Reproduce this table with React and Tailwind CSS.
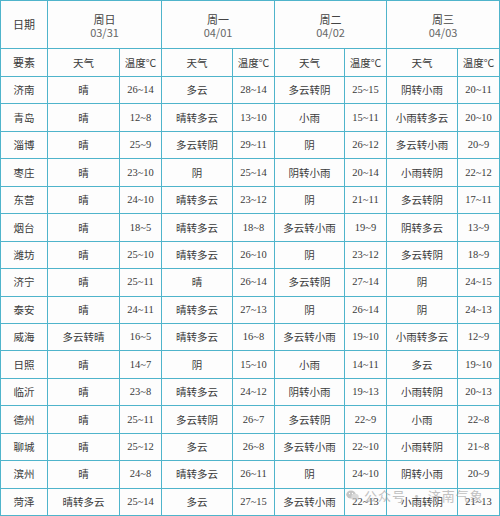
import React from "react";

const days = [
  ["周日", "03/31"],
  ["周一", "04/01"],
  ["周二", "04/02"],
  ["周三", "04/03"],
];

const rows = [
  ["济南", "晴", "26~14", "多云", "28~14", "多云转阴", "25~15", "阴转小雨", "20~11"],
  ["青岛", "晴", "12~8", "晴转多云", "13~10", "小雨", "15~11", "小雨转多云", "20~10"],
  ["淄博", "晴", "25~9", "多云转阴", "29~11", "阴", "26~12", "多云转小雨", "20~9"],
  ["枣庄", "晴", "23~10", "阴", "25~14", "阴转小雨", "20~14", "小雨转阴", "22~12"],
  ["东营", "晴", "24~10", "晴转多云", "23~12", "阴", "21~11", "多云转阴", "17~11"],
  ["烟台", "晴", "18~5", "晴转多云", "18~8", "多云转小雨", "19~9", "阴转多云", "13~9"],
  ["潍坊", "晴", "25~10", "晴转多云", "26~10", "阴", "23~12", "多云转阴", "18~9"],
  ["济宁", "晴", "25~11", "晴", "26~14", "多云转阴", "27~14", "阴", "24~15"],
  ["泰安", "晴", "24~11", "晴转多云", "27~13", "阴", "26~14", "阴", "24~13"],
  ["威海", "多云转晴", "16~5", "晴转多云", "16~8", "多云转小雨", "19~10", "小雨转多云", "12~9"],
  ["日照", "晴", "14~7", "阴", "15~10", "小雨", "14~11", "多云", "19~10"],
  ["临沂", "晴", "23~8", "晴转多云", "24~12", "阴转小雨", "19~13", "小雨转阴", "20~13"],
  ["德州", "晴", "25~11", "多云转阴", "26~7", "多云转阴", "22~9", "小雨", "22~8"],
  ["聊城", "晴", "25~12", "多云", "26~8", "多云转小雨", "22~10", "小雨转阴", "21~8"],
  ["滨州", "晴", "24~8", "晴转多云", "26~11", "阴", "24~10", "阴转小雨", "20~9"],
  ["菏泽", "晴转多云", "25~14", "多云", "27~15", "多云转小雨", "22~13", "小雨转阴", "21~13"],
];

const cjk = "font-['Microsoft_YaHei','Noto_Sans_CJK_SC',sans-serif]";
const num = "font-['Liberation_Serif','Times_New_Roman',serif]";

function Cell({ children, className = "" }) {
  return (
    <div className={`bg-[#fdfdfd] flex items-center justify-center text-[#3a3a3a] ${className}`}>
      {children}
    </div>
  );
}

export default function App() {
  return (
    <div className="relative w-[500px] h-[516px] bg-white overflow-hidden">
      <div className="w-[500px] h-[516px] bg-[#4fb4cb] p-px grid gap-px grid-cols-[46px_71px_41px_70px_41px_69px_41px_70px_41px] grid-rows-[47px_27px_repeat(16,minmax(0,1fr))]">
        <Cell className={`${cjk} text-[11px]`}>日期</Cell>
        {days.map(([d, dt]) => (
          <Cell key={d} className="col-span-2 flex-col leading-[13px] pt-[2px]">
            <span className={`${cjk} text-[11px] text-[#444]`}>{d}</span>
            <span className={`${cjk} text-[11px] text-[#666]`}>{dt}</span>
          </Cell>
        ))}
        <Cell className={`${cjk} text-[11px]`}>要素</Cell>
        {days.map(([d]) => (
          <React.Fragment key={d}>
            <Cell className={`${cjk} text-[10.5px]`}>天气</Cell>
            <Cell className={`${cjk} text-[10.5px]`}>温度°C</Cell>
          </React.Fragment>
        ))}
        {rows.map((r) =>
          r.map((v, i) => (
            <Cell
              key={r[0] + i}
              className={i > 0 && i % 2 === 0 ? `${num} text-[10.5px]` : `${cjk} text-[10.5px]`}
            >
              {v}
            </Cell>
          ))
        )}
      </div>
      <div className="absolute left-[346px] top-[486px] flex items-center gap-[5px] opacity-60 text-[#9a9a9a]">
        <svg width="13" height="11" viewBox="0 0 26 22" fill="#a0a0a0">
          <ellipse cx="10" cy="9" rx="9.5" ry="8" />
          <ellipse cx="18" cy="14" rx="7.5" ry="6.5" fill="#c4c4c4" />
          <circle cx="7" cy="7" r="1.3" fill="#fff" />
          <circle cx="13" cy="7" r="1.3" fill="#fff" />
        </svg>
        <span className={`${cjk} text-[13px] tracking-[1px]`}>公众号 · 济南气象</span>
      </div>
    </div>
  );
}
